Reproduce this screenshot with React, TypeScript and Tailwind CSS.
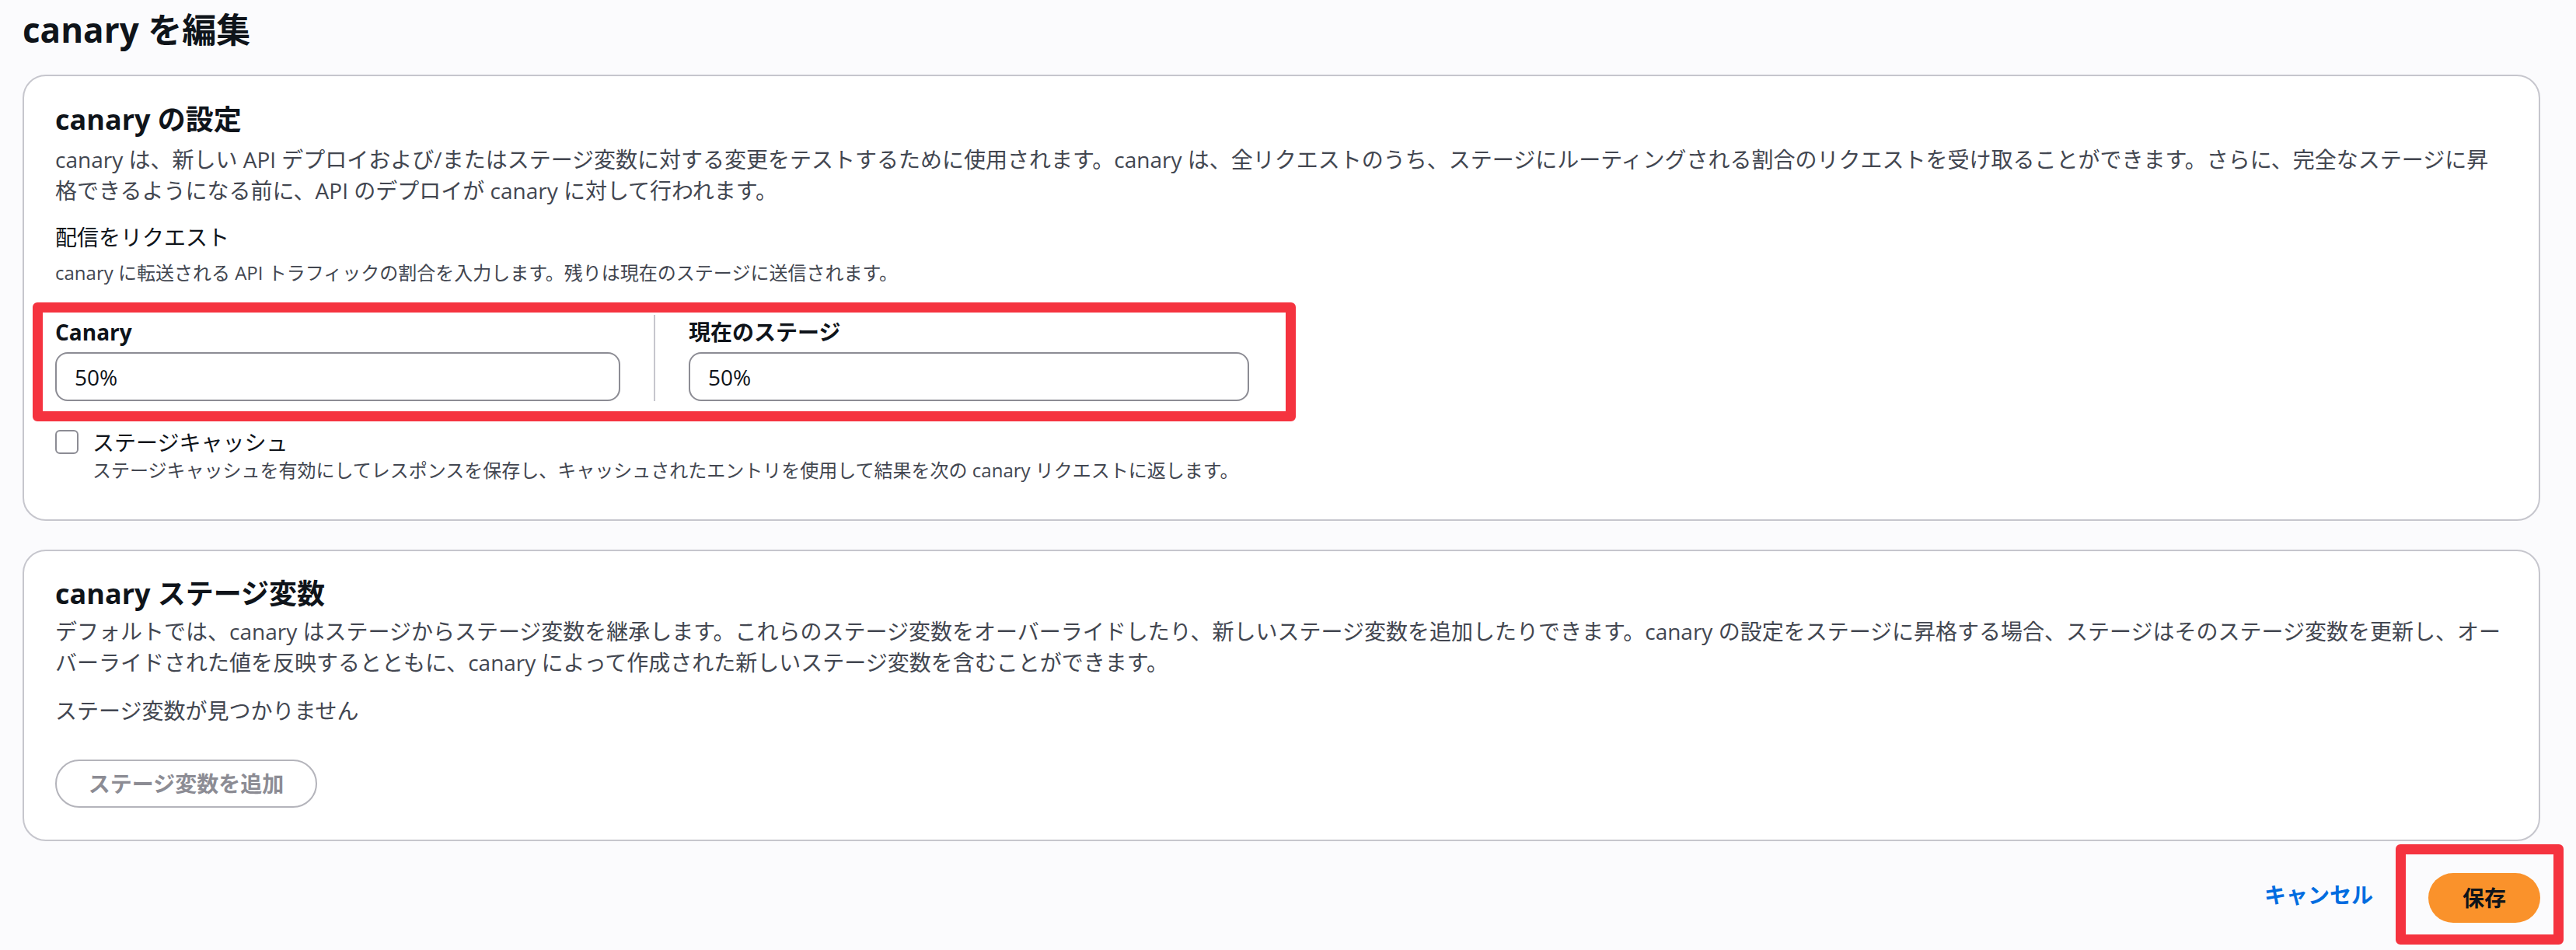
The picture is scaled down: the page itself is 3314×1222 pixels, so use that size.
import React from 'react';

const font = "font-['Open_Sans','Noto_Sans_CJK_JP',sans-serif]";

const Card: React.FC<{ className?: string; children: React.ReactNode }> = ({ className = '', children }) => (
  <div className={`rounded-[30px] border-2 border-[#c6c6cd] bg-white pl-[40px] pr-[38px] ${className}`}>
    {children}
  </div>
);

const App: React.FC = () => {
  return (
    <div className={`${font} min-h-[1222px] bg-[#fbfbfd] pl-[29px] pr-[46px] pt-[10px] text-[#0f141a]`}>
      <h1 className="text-[44px] font-bold leading-[56px]">canary を編集</h1>

      {/* canary settings */}
      <Card className="mt-[30px] pt-[32px] pb-[47px]">
        <h2 className="text-[36px] font-bold leading-[48px]">canary の設定</h2>
        <p className="mt-[7px] text-[28px] leading-[40px] text-[#424650]">
          canary は、新しい API デプロイおよび/またはステージ変数に対する変更をテストするために使用されます。canary は、全リクエストのうち、ステージにルーティングされる割合のリクエストを受け取ることができます。さらに、完全なステージに昇
          <br />
          格できるようになる前に、API のデプロイが canary に対して行われます。
        </p>

        <div className="mt-[20px] text-[28px] leading-[40px]">配信をリクエスト</div>
        <div className="mt-[10px] text-[24px] leading-[32px] text-[#424650]">
          canary に転送される API トラフィックの割合を入力します。残りは現在のステージに送信されます。
        </div>

        <div className="ml-[-29px] mt-[22px] w-[1625px] rounded-[6px] border-[13px] border-[#f5333f] bg-white pl-[16px] pt-[3px] pb-[13px]">
          <div className="flex">
            <div className="w-[727px] pt-[2px]">
              <div className="text-[28px] font-bold leading-[40px]">Canary</div>
              <div className="mt-[6px] flex h-[63px] items-center rounded-[16px] border-2 border-[#8c8c94] pl-[23px] text-[28px]">
                50%
              </div>
            </div>
            <div className="mx-[43px] w-[2px] bg-[#c6c6cd]" />
            <div className="w-[721px] pt-[2px]">
              <div className="text-[28px] font-bold leading-[40px]">現在のステージ</div>
              <div className="mt-[6px] flex h-[63px] items-center rounded-[16px] border-2 border-[#8c8c94] pl-[23px] text-[28px]">
                50%
              </div>
            </div>
          </div>
        </div>

        <div className="mt-[7px] flex items-start">
          <div className="mt-[4px] h-[31px] w-[30px] shrink-0 rounded-[6px] border-2 border-[#8c8c94] bg-white" />
          <div className="ml-[18px]">
            <div className="text-[28px] leading-[40px]">ステージキャッシュ</div>
            <div className="text-[24px] leading-[32px] text-[#424650]">
              ステージキャッシュを有効にしてレスポンスを保存し、キャッシュされたエントリを使用して結果を次の canary リクエストに返します。
            </div>
          </div>
        </div>
      </Card>

      {/* canary stage variables */}
      <Card className="mt-[37px] pt-[31px] pb-[41px]">
        <h2 className="text-[36px] font-bold leading-[48px]">canary ステージ変数</h2>
        <p className="mt-[4px] text-[28px] leading-[40px] text-[#424650]">
          デフォルトでは、canary はステージからステージ変数を継承します。これらのステージ変数をオーバーライドしたり、新しいステージ変数を追加したりできます。canary の設定をステージに昇格する場合、ステージはそのステージ変数を更新し、オー
          <br />
          バーライドされた値を反映するとともに、canary によって作成された新しいステージ変数を含むことができます。
        </p>
        <div className="mt-[22px] text-[28px] leading-[40px] text-[#424650]">ステージ変数が見つかりません</div>
        <button
          disabled
          className="mt-[43px] flex h-[62px] w-[337px] items-center justify-center rounded-full border-2 border-[#b4b4bb] bg-white text-[28px] font-bold text-[#8c8c94]"
        >
          ステージ変数を追加
        </button>
      </Card>

      {/* footer actions */}
      <div className="mt-[4px] flex items-center justify-end">
        <span className="text-[28px] font-bold text-[#006ce0]">キャンセル</span>
        <div className="ml-[29px] mr-[-30px] rounded-[6px] border-[13px] border-[#f5333f] pt-[24px] pb-[15px] pl-[29px] pr-[17px]">
          <button className="flex h-[64px] w-[144px] items-center justify-center rounded-full bg-[#fa922b] text-[28px] font-bold text-[#0f141a]">
            保存
          </button>
        </div>
      </div>
    </div>
  );
};

export default App;
